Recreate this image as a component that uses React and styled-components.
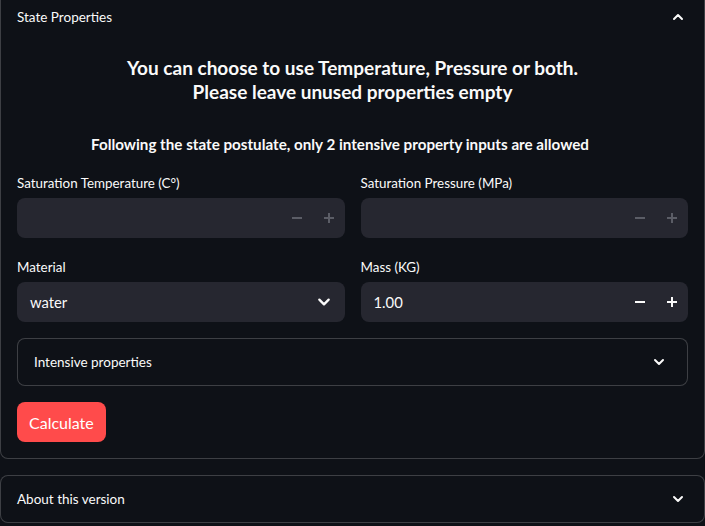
import React from "react";
import styled, {createGlobalStyle} from "styled-components";

const GlobalStyle = createGlobalStyle`
    body{
        margin:0;
        background:#0e1117;
        color:#fafafa;
        font-family:Lato, "Noto Sans", sans-serif;
        overflow:hidden;
    }
`

const Page = styled.div`
    margin-top:-7px;
    display:flex;
    flex-direction:column;
    gap:16px;
`

const Expander = styled.div`
    border:1px solid rgba(250,250,250,0.2);
    border-radius:8px;
    background:#0e1117;
`

const Summary = styled.div`
    height:46px;
    display:flex;
    align-items:center;
    justify-content:space-between;
    padding:0 ${props => props.$inner ? "22px" : "20px"} 0 16px;
    font-size:13.5px;
    color:#fafafa;
`

const Body = styled.div`
    padding:0 16px 16px;
    display:flex;
    flex-direction:column;
`

const Heading = styled.h4`
    margin:16px 0 0;
    font-size:19px;
    font-weight:700;
    line-height:24px;
    text-align:center;
`

const Note = styled.p`
    margin:29px 0 0;
    padding-right:25px;
    font-size:15.2px;
    font-weight:700;
    line-height:22px;
    text-align:center;
`

const Grid = styled.div`
    margin-top:18px;
    display:grid;
    grid-template-columns:1fr 1fr;
    column-gap:16px;
    row-gap:19px;
`

const Field = styled.div`
    display:flex;
    flex-direction:column;
    gap:5px;
`

const Label = styled.label`
    font-size:13.4px;
    line-height:20px;
`

const InputBox = styled.div`
    height:40px;
    border-radius:8px;
    background:#262730;
    display:flex;
    align-items:center;
    padding-left:13px;
    padding-right:${props => props.$select ? "14px" : "0"};
    font-size:14.8px;
`

const Value = styled.span`
    flex:1;
`

const Step = styled.button`
    width:32px;
    height:40px;
    border:none;
    background:transparent;
    display:flex;
    align-items:center;
    justify-content:center;
    padding:0;
    color:${props => props.$disabled ? "#5b5d66" : "#fafafa"};
`

const Chevron = styled.svg`
    width:${props => props.$size || 12}px;
    height:${props => props.$size || 12}px;
    flex:none;
`

const Inner = styled(Expander)`
    margin-top:16px;
`

const Button = styled.button`
    margin-top:16px;
    align-self:flex-start;
    height:40px;
    padding:0 12px;
    border:none;
    border-radius:8px;
    background:#ff4b4b;
    color:#fff;
    font-family:inherit;
    font-size:16px;
`

const Down = ({size}) => (
    <Chevron $size={size} viewBox="0 0 12 12" fill="none">
        <path d="M2 4l4 4 4-4" stroke="#fafafa" strokeWidth="2" strokeLinecap="round" strokeLinejoin="round"/>
    </Chevron>
)

const Up = () => (
    <Chevron viewBox="0 0 12 12" fill="none">
        <path d="M2 8l4-4 4 4" stroke="#fafafa" strokeWidth="2" strokeLinecap="round" strokeLinejoin="round"/>
    </Chevron>
)

const Minus = () => (
    <svg width="10" height="10" viewBox="0 0 10 10"><path d="M0 5h10" stroke="currentColor" strokeWidth="2"/></svg>
)

const Plus = () => (
    <svg width="10" height="10" viewBox="0 0 10 10"><path d="M0 5h10M5 0v10" stroke="currentColor" strokeWidth="2"/></svg>
)

const NumberInput = ({value}) => (
    <InputBox>
        <Value>{value}</Value>
        <Step $disabled={!value}><Minus/></Step>
        <Step $disabled={!value}><Plus/></Step>
    </InputBox>
)

const App = () => {
    return(
        <>
        <GlobalStyle/>
        <Page>
            <Expander>
                <Summary>
                    <span>State Properties</span>
                    <Up/>
                </Summary>
                <Body>
                    <Heading>
                        You can choose to use Temperature, Pressure or both.<br/>
                        Please leave unused properties empty
                    </Heading>
                    <Note>Following the state postulate, only 2 intensive property inputs are allowed</Note>
                    <Grid>
                        <Field>
                            <Label>Saturation Temperature (C°)</Label>
                            <NumberInput value=""/>
                        </Field>
                        <Field>
                            <Label>Saturation Pressure (MPa)</Label>
                            <NumberInput value=""/>
                        </Field>
                        <Field>
                            <Label>Material</Label>
                            <InputBox $select>
                                <Value>water</Value>
                                <Down size={14}/>
                            </InputBox>
                        </Field>
                        <Field>
                            <Label>Mass (KG)</Label>
                            <NumberInput value="1.00"/>
                        </Field>
                    </Grid>
                    <Inner>
                        <Summary $inner>
                            <span>Intensive properties</span>
                            <Down/>
                        </Summary>
                    </Inner>
                    <Button>Calculate</Button>
                </Body>
            </Expander>
            <Expander>
                <Summary>
                    <span>About this version</span>
                    <Down/>
                </Summary>
            </Expander>
        </Page>
        </>
    )
}

export default App
